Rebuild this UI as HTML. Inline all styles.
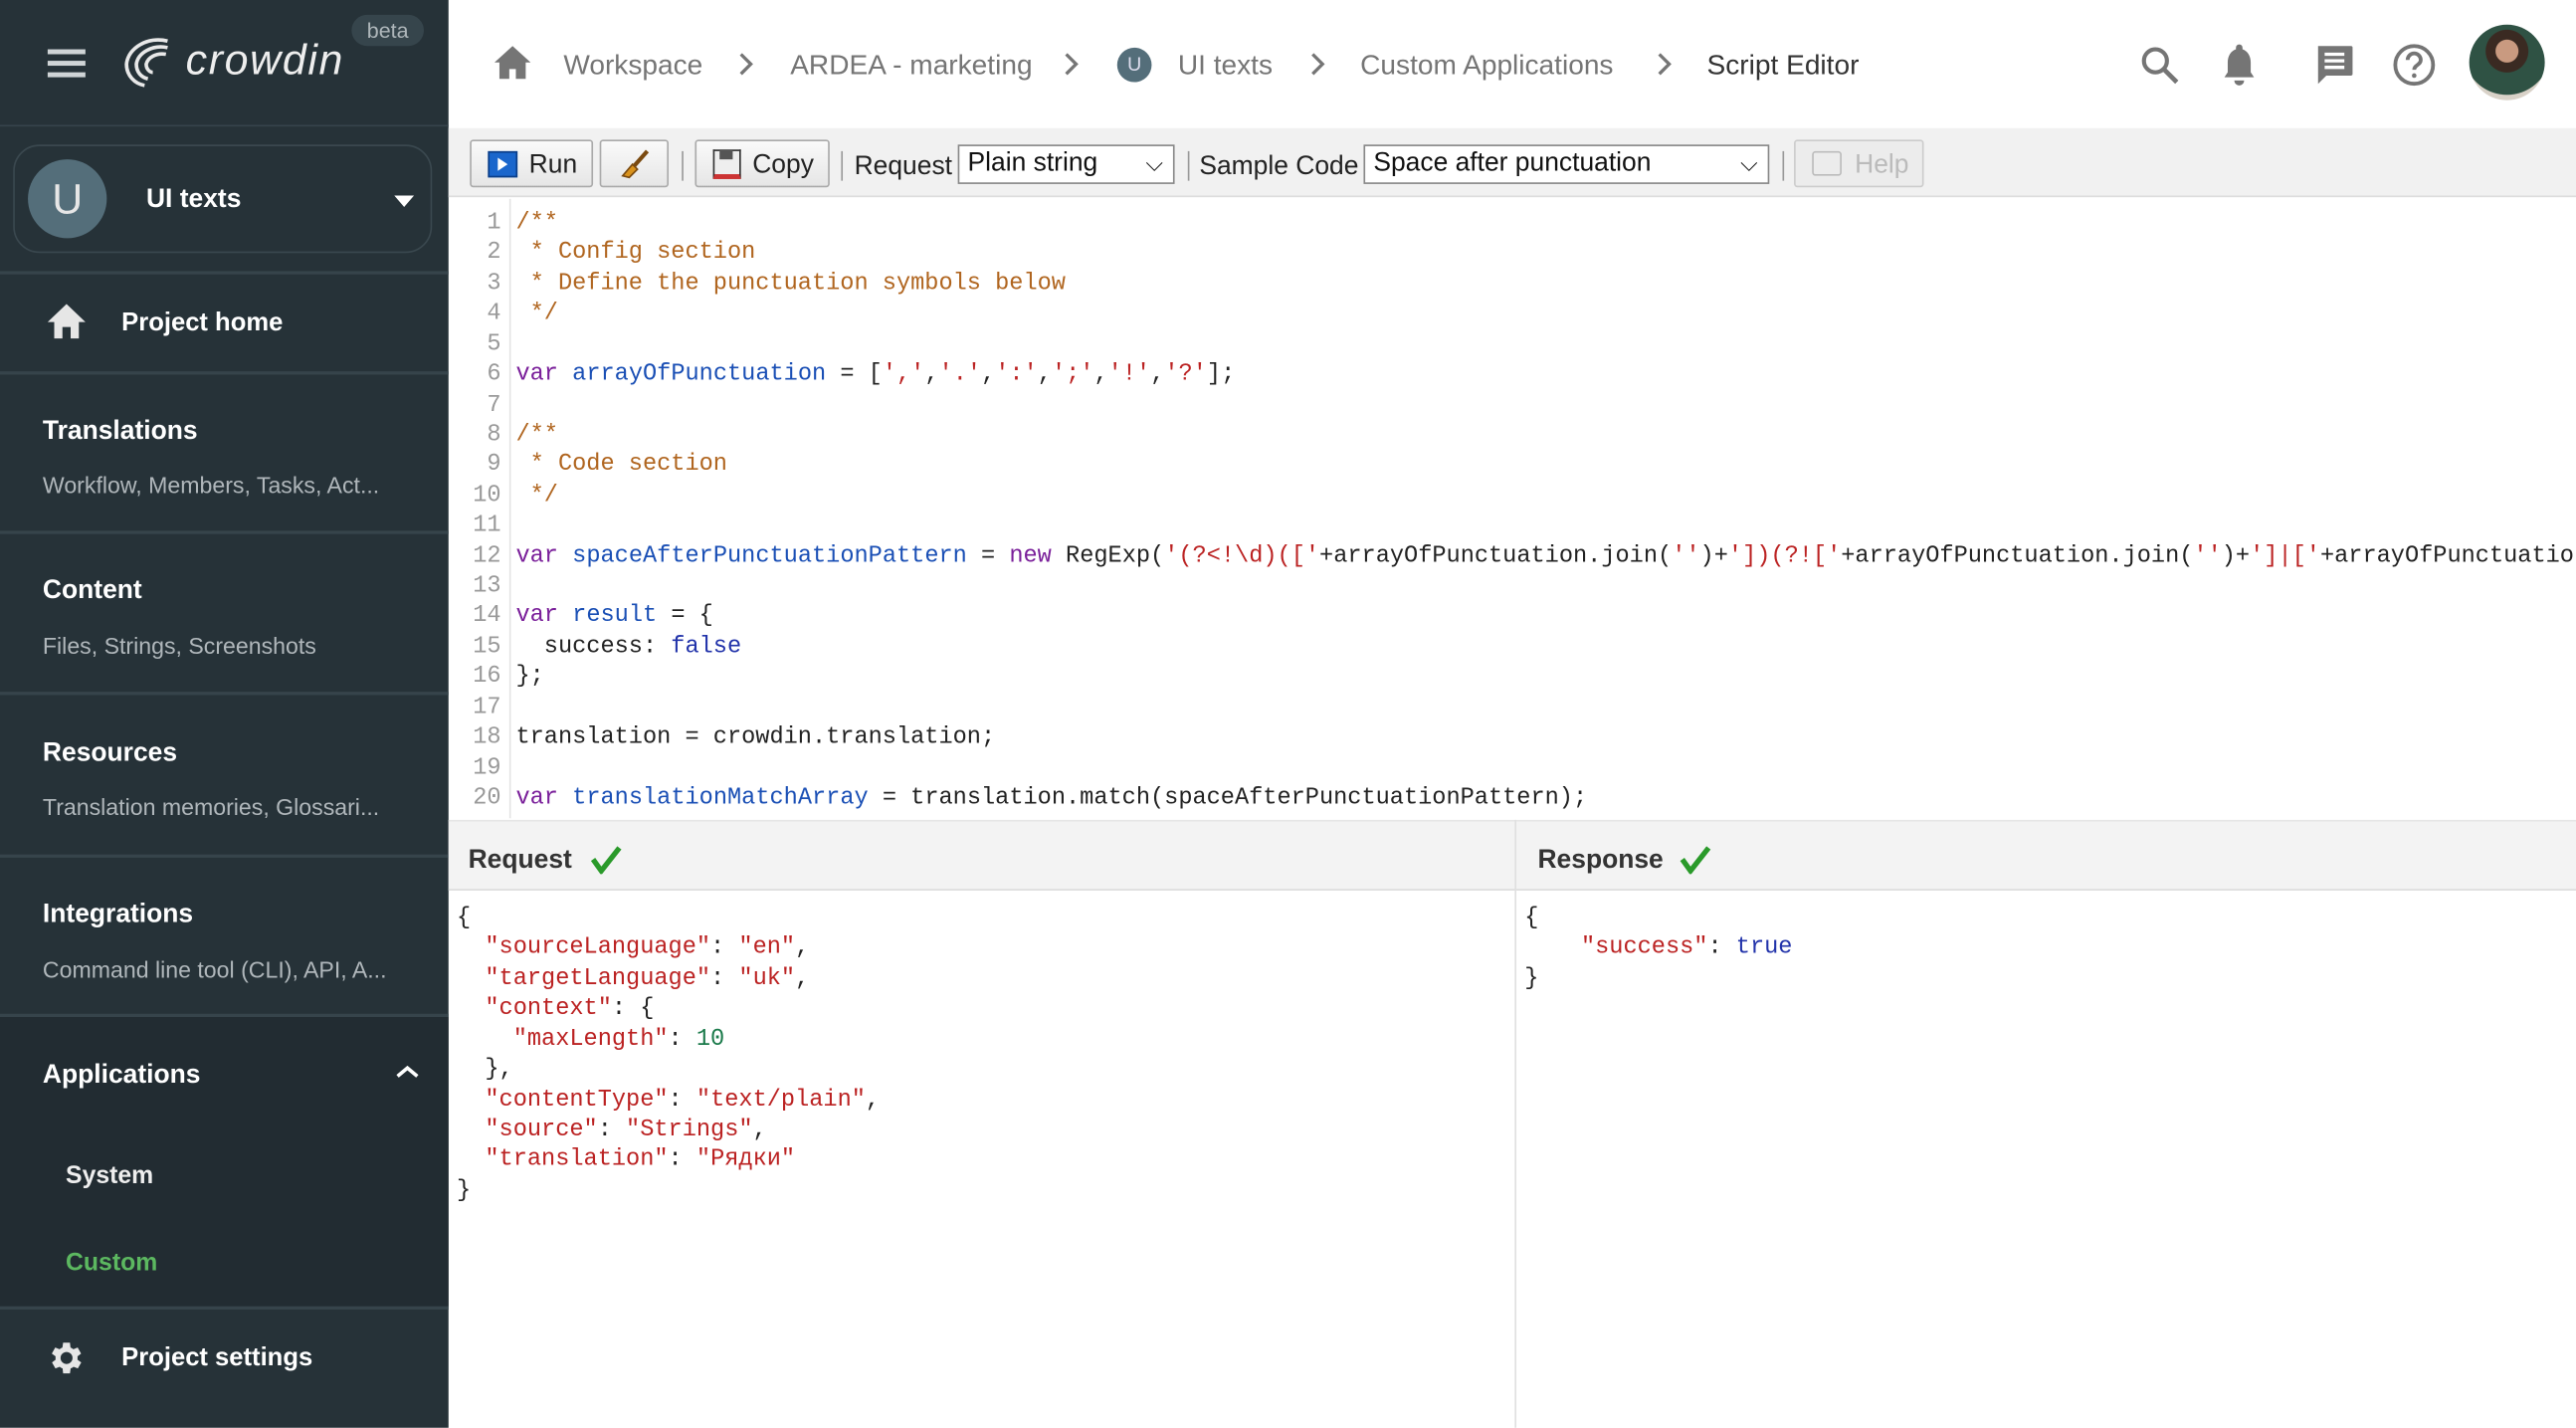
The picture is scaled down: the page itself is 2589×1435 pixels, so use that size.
<!DOCTYPE html>
<html><head><meta charset="utf-8"><style>
*{box-sizing:border-box;margin:0;padding:0}
html,body{width:2589px;height:1435px;overflow:hidden;background:#fff}
#w{position:absolute;left:0;top:0;width:1568px;height:869px;transform:scale(1.65115);transform-origin:0 0;font-family:"Liberation Sans",sans-serif;overflow:hidden}
.sb{position:absolute;left:0;top:0;width:273px;height:869px;background:#263238;color:#fff}
.abs{position:absolute}
.hl{position:absolute;left:0;width:273px;height:2px;background:#36444b}
.it{position:absolute;left:26px;font-size:16px;font-weight:bold;color:#fff}
.sub{position:absolute;left:26px;font-size:14px;color:#b0b7bb;white-space:nowrap}
.bc{position:absolute;top:30px;font-size:17px;color:#757575}
.chev{position:absolute;top:31px}
.tb{position:absolute;left:273px;top:78px;width:1295px;height:42px;background:#f1f1f1;border-bottom:1px solid #ddd}
.btn{position:absolute;top:7px;height:29px;border:1px solid #aaa;border-radius:2px;background:linear-gradient(#fafafa,#e6e6e6);font-size:16px;color:#222}
.sel{position:absolute;top:10px;height:24px;border:1px solid #888;background:#fff;font-size:16px;color:#111;padding:2px 5px}
.lab{position:absolute;top:15px;font-size:16px;color:#222}
.sep{position:absolute;top:14px;width:1px;height:18px;background:#999}
.code{position:absolute;font-family:"Liberation Mono",monospace;font-size:14.3px;line-height:18.42px;white-space:pre;color:#222}
.ln{position:absolute;left:274px;top:127px;width:31px;text-align:right;color:#999;font-family:"Liberation Mono",monospace;font-size:14.3px;line-height:18.42px;white-space:pre}
.c{color:#b0651f}.k{color:#7a1f9a}.d{color:#1a4fb5}.s{color:#b22}.a{color:#2233aa}.n{color:#1a7a4a}
</style></head><body><div id="w">
<div class="sb">
 <div class="abs" style="left:29px;top:30px;width:23px;height:3px;background:#cfd4d6;box-shadow:0 7px 0 #cfd4d6,0 14px 0 #cfd4d6"></div>
 <svg class="abs" style="left:72px;top:20px" width="36" height="34" viewBox="0 0 36 34"><g fill="none" stroke="#e8e8e8" stroke-width="2.2"><path d="M30 5C18 2 6 9 5 19c0 7 5 12 11 13"/><path d="M30 9C21 7 12 12 11 19c0 5 3 8 7 9"/><path d="M29 13c-6-1-11 2-12 6 0 3 2 5 4 5"/></g></svg>
 <div class="abs" style="left:113px;top:21px;font-size:26px;font-style:italic;color:#eee;letter-spacing:1px">crowdin</div>
 <div class="abs" style="left:214px;top:9px;width:44px;height:19px;border-radius:10px;background:#36454c;color:#aeb6ba;font-size:13px;text-align:center;line-height:19px">beta</div>
 <div class="hl" style="top:76px;height:1px"></div>
 <div class="abs" style="left:8px;top:88px;width:255px;height:66px;border:1px solid #3a484f;border-radius:16px"></div>
 <div class="abs" style="left:17px;top:97px;width:48px;height:48px;border-radius:50%;background:#546e7a;color:#e6e6e6;font-size:26px;text-align:center;line-height:48px">U</div>
 <div class="abs" style="left:89px;top:113px;font-size:16px;font-weight:bold">UI texts</div>
 <div class="abs" style="left:240px;top:119px;border-left:6px solid transparent;border-right:6px solid transparent;border-top:7px solid #fff"></div>
 <div class="hl" style="top:165px"></div>
 <svg class="abs" style="left:28px;top:184px" width="25" height="23" viewBox="0 0 25 23"><path d="M12.5 1L1 12h4v10h5v-7h5v7h5V12h4z" fill="#e6e6e6"/></svg>
 <div class="abs" style="left:74px;top:188px;font-size:15.5px;font-weight:bold">Project home</div>
 <div class="hl" style="top:226px"></div>
 <div class="it" style="top:254px">Translations</div><div class="sub" style="top:287px">Workflow, Members, Tasks, Act...</div>
 <div class="hl" style="top:323px"></div>
 <div class="it" style="top:351px">Content</div><div class="sub" style="top:385px">Files, Strings, Screenshots</div>
 <div class="hl" style="top:421px"></div>
 <div class="it" style="top:450px">Resources</div><div class="sub" style="top:483px">Translation memories, Glossari...</div>
 <div class="hl" style="top:520px"></div>
 <div class="it" style="top:548px">Integrations</div><div class="sub" style="top:582px">Command line tool (CLI), API, A...</div>
 <div class="hl" style="top:617px"></div>
 <div class="abs" style="left:0;top:619px;width:273px;height:176px;background:#222c32"></div>
 <div class="it" style="top:646px">Applications</div>
 <svg class="abs" style="left:240px;top:647px" width="16" height="10" viewBox="0 0 16 10"><path d="M2 8l6-5 6 5" stroke="#fff" stroke-width="2.2" fill="none"/></svg>
 <div class="abs" style="left:40px;top:707px;font-size:15px;font-weight:bold;color:#eee">System</div>
 <div class="abs" style="left:40px;top:760px;font-size:15px;font-weight:bold;color:#5cb860">Custom</div>
 <div class="hl" style="top:795px"></div>
 <svg class="abs" style="left:28px;top:814px" width="25" height="25" viewBox="0 0 24 24"><path fill="#e6e6e6" d="M19.4 13a7.5 7.5 0 000-2l2.1-1.6-2-3.5-2.5 1a7 7 0 00-1.7-1L15 3h-4l-.4 2.9a7 7 0 00-1.7 1l-2.5-1-2 3.5L6.6 11a7.5 7.5 0 000 2l-2.1 1.6 2 3.5 2.5-1a7 7 0 001.7 1L11 21h4l.4-2.9a7 7 0 001.7-1l2.5 1 2-3.5zM13 15.5a3.5 3.5 0 110-7 3.5 3.5 0 010 7z" transform="translate(-1 0)"/></svg>
 <div class="abs" style="left:74px;top:818px;font-size:15.5px;font-weight:bold">Project settings</div>
</div>

<svg class="abs" style="left:300px;top:27px" width="24" height="22" viewBox="0 0 24 22"><path d="M12 1L1 11h3v10h6v-6h4v6h6V11h3z" fill="#757575"/></svg>
<div class="bc" style="left:343px">Workspace</div><svg class="chev" style="left:449px" width="10" height="16" viewBox="0 0 10 16"><path d="M2 2l6 6-6 6" stroke="#757575" stroke-width="2" fill="none"/></svg>
<div class="bc" style="left:481px">ARDEA - marketing</div><svg class="chev" style="left:647px" width="10" height="16" viewBox="0 0 10 16"><path d="M2 2l6 6-6 6" stroke="#757575" stroke-width="2" fill="none"/></svg>
<div class="abs" style="left:680px;top:29px;width:21px;height:21px;border-radius:50%;background:#546e7a;color:#dde;font-size:12px;text-align:center;line-height:21px">U</div>
<div class="bc" style="left:717px">UI texts</div><svg class="chev" style="left:797px" width="10" height="16" viewBox="0 0 10 16"><path d="M2 2l6 6-6 6" stroke="#757575" stroke-width="2" fill="none"/></svg>
<div class="bc" style="left:828px">Custom Applications</div><svg class="chev" style="left:1008px" width="10" height="16" viewBox="0 0 10 16"><path d="M2 2l6 6-6 6" stroke="#757575" stroke-width="2" fill="none"/></svg>
<div class="bc" style="left:1039px;color:#333">Script Editor</div>
<svg class="abs" style="left:1302px;top:27px" width="26" height="26" viewBox="0 0 26 26"><circle cx="10" cy="10" r="7" stroke="#757575" stroke-width="2.5" fill="none"/><path d="M15 15l8 8" stroke="#757575" stroke-width="2.8"/></svg>
<svg class="abs" style="left:1352px;top:25px" width="22" height="28" viewBox="0 0 22 28"><path d="M11 2a2 2 0 012 2v1c3 1 5 4 5 8v6l2 3H2l2-3v-6c0-4 2-7 5-8V4a2 2 0 012-2zM8 24h6a3 3 0 01-6 0z" fill="#757575"/></svg>
<svg class="abs" style="left:1408px;top:26px" width="26" height="28" viewBox="0 0 26 28"><path d="M3 2h20a1 1 0 011 1v16a1 1 0 01-1 1H8l-5 5z" fill="#757575"/><path d="M7 7h12M7 11h12M7 15h12" stroke="#fff" stroke-width="2"/></svg>
<svg class="abs" style="left:1456px;top:26px" width="27" height="27" viewBox="0 0 27 27"><circle cx="13.5" cy="13.5" r="11.5" stroke="#757575" stroke-width="2.3" fill="none"/><path d="M9.5 10.5a4 4 0 118 0c0 3-4 3-4 6" stroke="#757575" stroke-width="2.3" fill="none"/><circle cx="13.5" cy="20" r="1.4" fill="#757575"/></svg>
<div class="abs" style="left:1503px;top:15px;width:46px;height:46px;border-radius:50%;background:radial-gradient(circle at 50% 35%,#c99a80 0 18%,#3a2a22 19% 34%,#2f5244 35% 70%,#d9d2c8 71%)"></div>

<div class="tb">
 <div class="btn" style="left:13px;width:75px"><div class="abs" style="left:10px;top:6px;width:18px;height:16px;background:#1a66cc;border:1px solid #0b3e88"></div><div class="abs" style="left:16px;top:10px;border-top:4px solid transparent;border-bottom:4px solid transparent;border-left:6px solid #fff"></div><span class="abs" style="left:35px;top:6px">Run</span></div>
 <div class="btn" style="left:92px;width:42px"><svg class="abs" style="left:11px;top:5px" width="20" height="18" viewBox="0 0 20 18"><path d="M17 1L9 10" stroke="#7a4a10" stroke-width="2.5"/><path d="M8 9l3 3-5 5-4-1z" fill="#d9921c" stroke="#7a4a10"/></svg></div>
 <div class="sep" style="left:142px"></div>
 <div class="btn" style="left:150px;width:82px"><div class="abs" style="left:10px;top:5px;width:17px;height:18px;background:#eee;border:1.5px solid #333;border-bottom:3px solid #c33"></div><div class="abs" style="left:14px;top:5px;width:8px;height:6px;background:#555"></div><span class="abs" style="left:34px;top:6px">Copy</span></div>
 <div class="sep" style="left:239px"></div>
 <div class="lab" style="left:247px">Request</div>
 <div class="sel" style="left:310px;width:132px">Plain string<span class="abs" style="right:6px;top:2px;font-size:14px">&#x2335;</span></div>
 <div class="sep" style="left:450px"></div>
 <div class="lab" style="left:457px">Sample Code</div>
 <div class="sel" style="left:557px;width:247px">Space after punctuation<span class="abs" style="right:6px;top:2px;font-size:14px">&#x2335;</span></div>
 <div class="sep" style="left:812px"></div>
 <div class="btn" style="left:819px;width:79px;border-color:#ccc;background:#ececec;color:#bbb"><div class="abs" style="left:10px;top:6px;width:18px;height:15px;border:1.5px solid #bbb;border-radius:2px"></div><span class="abs" style="left:36px;top:6px">Help</span></div>
</div>

<div class="ln">1
2
3
4
5
6
7
8
9
10
11
12
13
14
15
16
17
18
19
20</div>
<div class="abs" style="left:310px;top:121px;width:1px;height:377px;background:#e4e4e4"></div>
<div class="code" style="left:314px;top:127px"><span class="c">/**
 * Config section
 * Define the punctuation symbols below
 */</span>

<span class="k">var</span> <span class="d">arrayOfPunctuation</span> = [<span class="s">','</span>,<span class="s">'.'</span>,<span class="s">':'</span>,<span class="s">';'</span>,<span class="s">'!'</span>,<span class="s">'?'</span>];

<span class="c">/**
 * Code section
 */</span>

<span class="k">var</span> <span class="d">spaceAfterPunctuationPattern</span> = <span class="k">new</span> RegExp(<span class="s">'(?&lt;!\d)(['</span>+arrayOfPunctuation.join(<span class="s">''</span>)+<span class="s">'])(?!['</span>+arrayOfPunctuation.join(<span class="s">''</span>)+<span class="s">']|['</span>+arrayOfPunctuation.join(<span class="s">''</span>)+<span class="s">']'</span>

<span class="k">var</span> <span class="d">result</span> = {
  success: <span class="a">false</span>
};

translation = crowdin.translation;

<span class="k">var</span> <span class="d">translationMatchArray</span> = translation.match(spaceAfterPunctuationPattern);</div>

<div class="abs" style="left:273px;top:499px;width:1295px;height:43px;background:#f3f3f3;border-bottom:1px solid #ddd;border-top:1px solid #e6e6e6"></div>
<div class="abs" style="left:922px;top:499px;width:1px;height:370px;background:#e0e0e0"></div>
<div class="abs" style="left:285px;top:515px;font-size:16px;font-weight:bold;color:#333">Request</div>
<svg class="abs" style="left:359px;top:514px" width="20" height="18" viewBox="0 0 20 18"><path d="M2 9l5 7L18 2" stroke="#2a9a2a" stroke-width="3.2" fill="none"/></svg>
<div class="abs" style="left:936px;top:515px;font-size:16px;font-weight:bold;color:#333">Response</div>
<svg class="abs" style="left:1022px;top:514px" width="20" height="18" viewBox="0 0 20 18"><path d="M2 9l5 7L18 2" stroke="#2a9a2a" stroke-width="3.2" fill="none"/></svg>

<div class="code" style="left:278px;top:550px">{
  <span class="s">"sourceLanguage"</span>: <span class="s">"en"</span>,
  <span class="s">"targetLanguage"</span>: <span class="s">"uk"</span>,
  <span class="s">"context"</span>: {
    <span class="s">"maxLength"</span>: <span class="n">10</span>
  },
  <span class="s">"contentType"</span>: <span class="s">"text/plain"</span>,
  <span class="s">"source"</span>: <span class="s">"Strings"</span>,
  <span class="s">"translation"</span>: <span class="s">"Рядки"</span>
}</div>
<div class="code" style="left:928px;top:550px">{
    <span class="s">"success"</span>: <span class="a">true</span>
}</div>
</div></body></html>
